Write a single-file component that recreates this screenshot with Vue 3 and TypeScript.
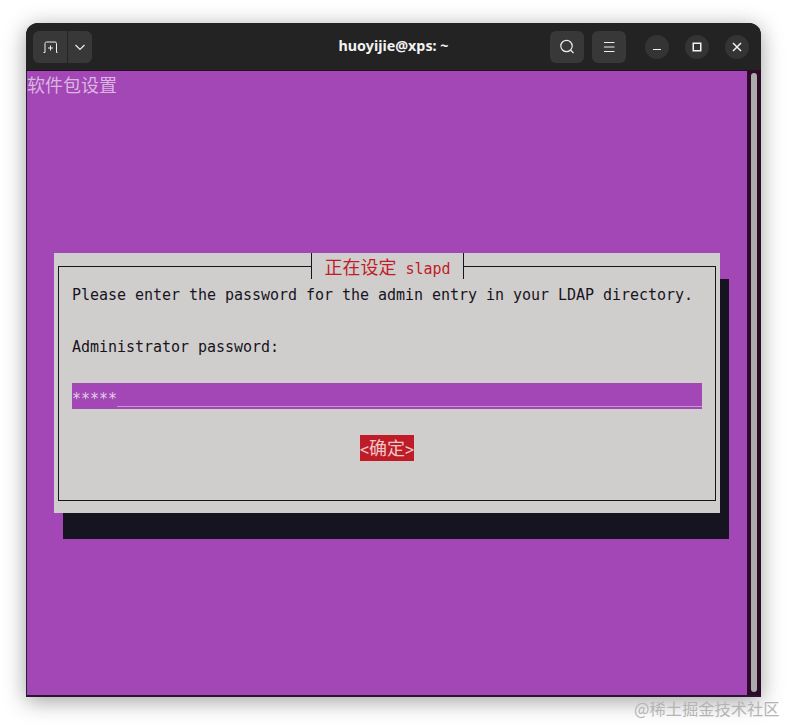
<script setup lang="ts">
const underscores = '_'.repeat(65)
</script>

<template>
  <div class="page">
    <div class="window">
      <header class="bar">
        <div class="tab-group">
          <button class="btn new-tab" aria-label="New tab">
            <svg width="16" height="16" viewBox="0 0 16 16" fill="none" stroke="#eeeeee" stroke-width="1">
              <path d="M1.5 13.5H3V4.5Q3 3 4.500 3H13Q14.500 3 14.500 4.500V13.500H15.500" />
              <path d="M8.500 6.500v5M6 9h5" />
            </svg>
          </button>
          <button class="btn chevron" aria-label="Menu">
            <svg width="12" height="12" viewBox="0 0 12 12" fill="none" stroke="#eeeeee" stroke-width="1.2">
              <path d="M1.5 4l4.5 4.500L10.500 4" />
            </svg>
          </button>
        </div>
        <div class="title">huoyijie@xps: ~</div>
        <div class="right">
          <button class="btn square" aria-label="Search">
            <svg width="16" height="16" viewBox="0 0 16 16" fill="none" stroke="#eeeeee" stroke-width="1.2">
              <circle cx="7.500" cy="7" r="5.700" />
              <path d="M11.500 11l3 3" />
            </svg>
          </button>
          <button class="btn square" aria-label="Menu">
            <svg width="16" height="16" viewBox="0 0 16 16" fill="none" stroke="#eeeeee" stroke-width="1.1">
              <path d="M3 3.500h10.500M3 8h10.500M3 12.500h10.500" />
            </svg>
          </button>
          <div class="win-controls">
            <button class="circle" aria-label="Minimize">
              <svg width="12" height="12" viewBox="0 0 12 12" fill="none" stroke="#f2f2f2" stroke-width="1.200">
                <path d="M2 8.500h8" />
              </svg>
            </button>
            <button class="circle" aria-label="Maximize">
              <svg width="12" height="12" viewBox="0 0 12 12" fill="none" stroke="#f2f2f2" stroke-width="1.500">
                <rect x="2.250" y="2.250" width="7.500" height="7.500" />
              </svg>
            </button>
            <button class="circle" aria-label="Close">
              <svg width="12" height="12" viewBox="0 0 12 12" fill="none" stroke="#f2f2f2" stroke-width="1.500">
                <path d="M2 2l8 8M10 2l-8 8" />
              </svg>
            </button>
          </div>
        </div>
      </header>
      <div class="body">
        <main class="screen">
          <div class="backtitle">软件包设置</div>
          <section class="dialog">
            <div class="legend"><span class="cjk">正在设定</span> slapd</div>
            <div class="frame">
              <div class="row">Please enter the password for the admin entry in your LDAP directory.</div>
              <div class="row gap">Administrator password:</div>
              <div class="row gap input">*****<span class="rule">{{ underscores }}</span></div>
              <div class="actions">
                <span class="ok">&lt;<span class="cjk">确定</span>&gt;</span>
              </div>
            </div>
          </section>
        </main>
        <aside class="scrollbar">
          <div class="thumb"></div>
        </aside>
      </div>
    </div>
    <div class="watermark">@稀土掘金技术社区</div>
  </div>
</template>

<style>
html,
body {
  margin: 0;
  background: #ffffff;
}
</style>

<style scoped>
.page {
  position: relative;
  width: 786px;
  height: 725px;
  padding: 23px 0 0 26px;
  box-sizing: border-box;
  overflow: hidden;
  background: #ffffff;
}
.window {
  width: 735px;
  height: 674px;
  box-sizing: border-box;
  display: flex;
  flex-direction: column;
  border-radius: 12px 12px 0 0;
  overflow: hidden;
  background: #241f31;
  box-shadow: 0 4px 22px rgba(0, 0, 0, 0.38);
}
.bar {
  flex: 0 0 47px;
  height: 47px;
  display: flex;
  align-items: center;
  justify-content: space-between;
  position: relative;
  padding: 0 12px 0 7px;
  background: #232323;
}
.tab-group {
  display: flex;
  gap: 1px;
}
.btn {
  display: flex;
  align-items: center;
  justify-content: center;
  height: 32px;
  padding: 0;
  border: none;
  background: #383838;
  border-radius: 6px;
}
.new-tab {
  width: 34px;
  border-radius: 6px 0 0 6px;
}
.chevron {
  width: 24px;
  border-radius: 0 6px 6px 0;
}
.title {
  position: absolute;
  left: 0;
  right: 0;
  top: 0;
  height: 47px;
  line-height: 46px;
  text-align: center;
  box-sizing: border-box;
  font-family: "Noto Sans", "Open Sans", sans-serif;
  font-size: 14.3px;
  font-weight: 700;
  color: #f2f2f2;
  pointer-events: none;
}
.right {
  display: flex;
  align-items: center;
  gap: 8px;
}
.square {
  width: 34px;
}
.win-controls {
  display: flex;
  gap: 16px;
  margin-left: 11px;
}
.circle {
  display: flex;
  align-items: center;
  justify-content: center;
  width: 24px;
  height: 24px;
  padding: 0;
  border: none;
  border-radius: 50%;
  background: #343434;
}
.body {
  flex: 1;
  min-height: 0;
  display: flex;
  border-left: 1px solid #241f31;
  border-top: 1px solid #2d0a28;
  border-bottom: 2px solid #2a1430;
}
.screen {
  width: 720px;
  flex: 0 0 720px;
  background: #a346b6;
  font-family: "DejaVu Sans Mono", "Noto Sans CJK SC", monospace;
  font-size: 15px;
  color: #171421;
}
.backtitle {
  height: 26px;
  line-height: 27px;
  font-family: "Noto Sans CJK SC", sans-serif;
  font-size: 18px;
  color: #d9b6e0;
}
.dialog {
  position: relative;
  width: 666px;
  height: 260px;
  margin: 156px 0 0 27px;
  padding: 13px 4px;
  box-sizing: border-box;
  background: #d0cecd;
  box-shadow: 9px 26px 0 #171421;
}
.legend {
  position: absolute;
  left: 257px;
  top: 0;
  width: 153px;
  height: 26px;
  box-sizing: border-box;
  border-left: 1px solid #171421;
  border-right: 1px solid #171421;
  background: #d0cecd;
  color: #c01c28;
  line-height: 32px;
  text-align: center;
  white-space: pre;
}
.cjk {
  font-family: "Noto Sans CJK SC", sans-serif;
  font-size: 18px;
  line-height: 1;
}
.frame {
  height: 235px;
  box-sizing: border-box;
  border: 1px solid #171421;
  padding: 12px 13px 0;
}
.row {
  height: 26px;
  line-height: 32px;
  white-space: pre;
  letter-spacing: -0.03px;
}
.gap {
  margin-top: 26px;
}
.input {
  width: 630px;
  overflow: hidden;
  background: #a346b6;
  color: #dfd0e3;
  line-height: 30px;
}
.rule {
  vertical-align: 1px;
}
.actions {
  display: flex;
  justify-content: center;
  margin-top: 26px;
}
.ok {
  width: 54px;
  height: 26px;
  line-height: 31px;
  background: #c01c28;
  color: #ecc8c8;
  text-align: center;
  white-space: nowrap;
  letter-spacing: -0.03px;
}
.scrollbar {
  flex: 1;
  display: flex;
  padding: 2px 3px 3px 4px;
  background: #2d0a28;
}
.thumb {
  width: 6px;
  border-radius: 3px;
  background: #ababab;
}
.watermark {
  position: absolute;
  left: 634px;
  top: 698px;
  font-family: "Noto Sans CJK SC", sans-serif;
  font-size: 16.3px;
  line-height: 20px;
  white-space: nowrap;
  color: #b4b4b4;
}
</style>
